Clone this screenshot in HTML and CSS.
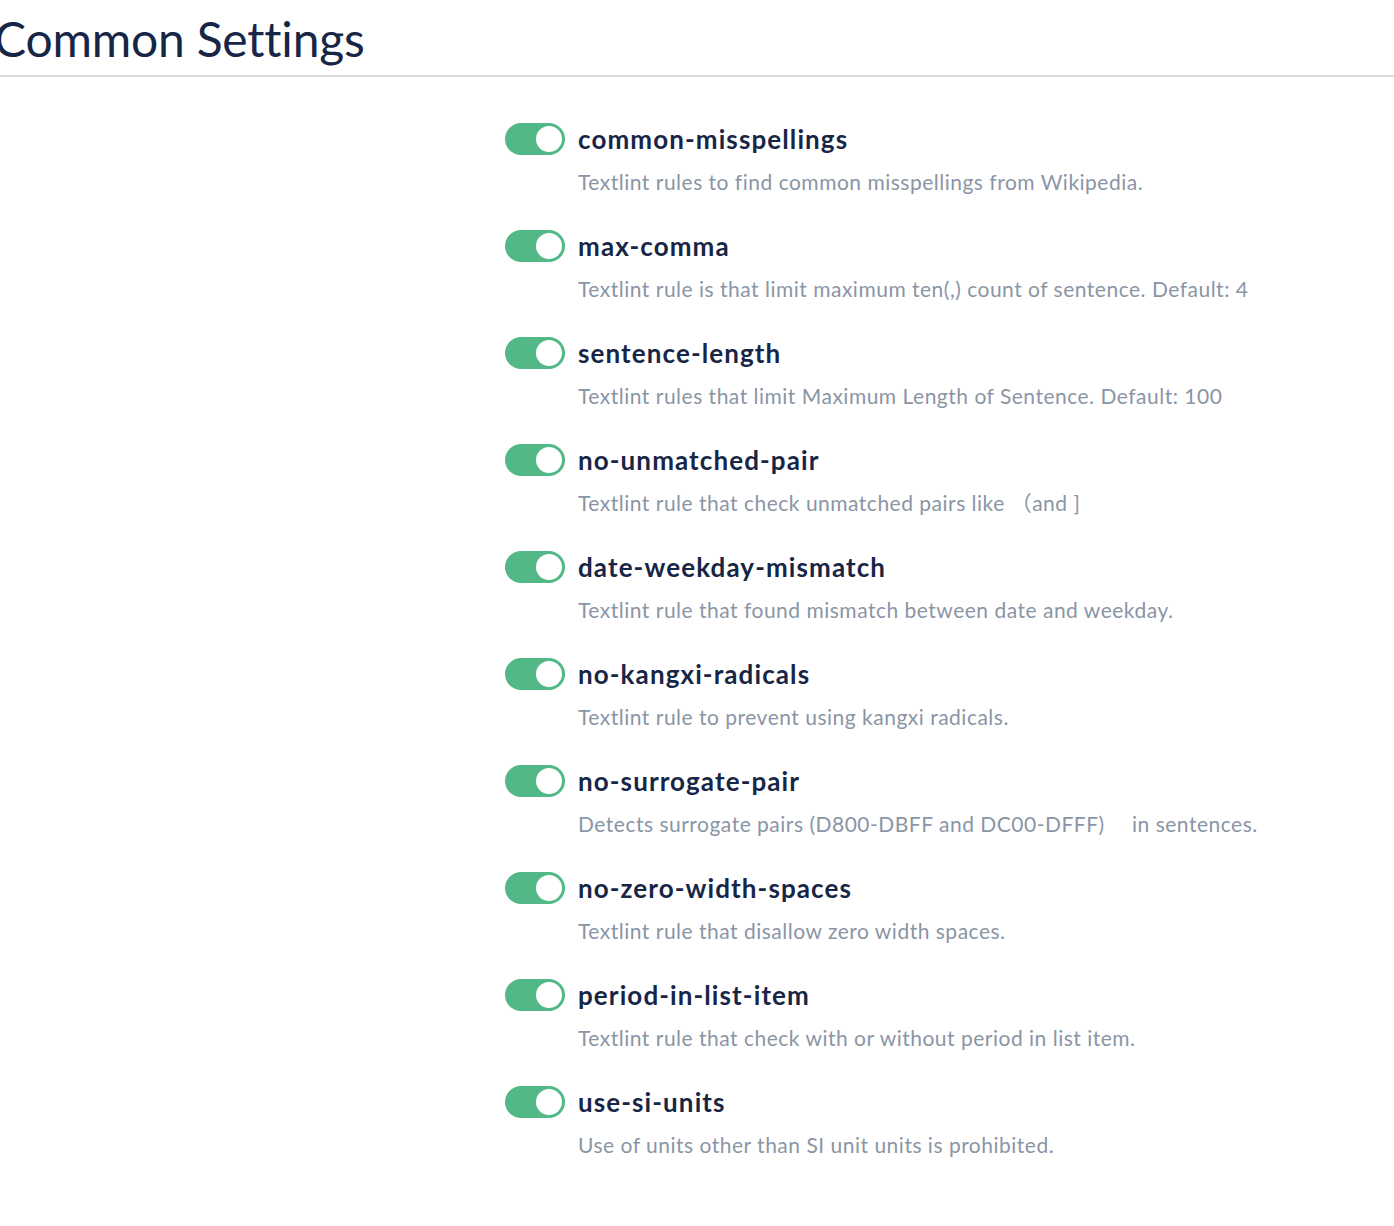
FILE: index.html
```html
<!DOCTYPE html>
<html lang="en">
<head>
<meta charset="utf-8">
<title>Common Settings</title>
<link rel="stylesheet" href="styles.css">
</head>
<body>
<header class="page-header">
  <h1 class="page-title">Common Settings</h1>
</header>
<ul class="rules">
  <li class="rule">
    <span class="toggle on"><span class="knob"></span></span>
    <span class="rule-name">common-misspellings</span>
    <span class="rule-desc">Textlint rules to find common misspellings from Wikipedia.</span>
  </li>
  <li class="rule">
    <span class="toggle on"><span class="knob"></span></span>
    <span class="rule-name">max-comma</span>
    <span class="rule-desc">Textlint rule is that limit maximum ten(,) count of sentence. Default: 4</span>
  </li>
  <li class="rule">
    <span class="toggle on"><span class="knob"></span></span>
    <span class="rule-name">sentence-length</span>
    <span class="rule-desc">Textlint rules that limit Maximum Length of Sentence. Default: 100</span>
  </li>
  <li class="rule">
    <span class="toggle on"><span class="knob"></span></span>
    <span class="rule-name">no-unmatched-pair</span>
    <span class="rule-desc">Textlint rule that check unmatched pairs like （and ]</span>
  </li>
  <li class="rule">
    <span class="toggle on"><span class="knob"></span></span>
    <span class="rule-name">date-weekday-mismatch</span>
    <span class="rule-desc">Textlint rule that found mismatch between date and weekday.</span>
  </li>
  <li class="rule">
    <span class="toggle on"><span class="knob"></span></span>
    <span class="rule-name">no-kangxi-radicals</span>
    <span class="rule-desc">Textlint rule to prevent using kangxi radicals.</span>
  </li>
  <li class="rule">
    <span class="toggle on"><span class="knob"></span></span>
    <span class="rule-name">no-surrogate-pair</span>
    <span class="rule-desc">Detects surrogate pairs (D800-DBFF and DC00-DFFF)　 in sentences.</span>
  </li>
  <li class="rule">
    <span class="toggle on"><span class="knob"></span></span>
    <span class="rule-name">no-zero-width-spaces</span>
    <span class="rule-desc">Textlint rule that disallow zero width spaces.</span>
  </li>
  <li class="rule">
    <span class="toggle on"><span class="knob"></span></span>
    <span class="rule-name">period-in-list-item</span>
    <span class="rule-desc">Textlint rule that check with or without period in list item.</span>
  </li>
  <li class="rule">
    <span class="toggle on"><span class="knob"></span></span>
    <span class="rule-name">use-si-units</span>
    <span class="rule-desc">Use of units other than SI unit units is prohibited.</span>
  </li>
</ul>
</body>
</html>
```

FILE: styles.css
```css
html, body {
  margin: 0;
  padding: 0;
  background: #ffffff;
}

body {
  font-family: Lato, "Noto Sans CJK SC", sans-serif;
  color: #172646;
}

.page-header {
  border-bottom: 2px solid #d8dbe0;
  height: 77px;
  box-sizing: border-box;
  padding-top: 9px;
}

.page-title {
  margin: 0 0 0 -6px;
  font-size: 48px;
  font-weight: 400;
  line-height: 60px;
  letter-spacing: -0.2px;
  color: #172646;
}

.rules {
  list-style: none;
  margin: 46px 0 0 0;
  padding: 0 0 0 505px;
  display: flex;
  flex-direction: column;
  gap: 34px;
}

.rule {
  display: grid;
  grid-template-columns: 60px 1fr;
  column-gap: 13px;
  row-gap: 13px;
  align-items: center;
}

.toggle {
  position: relative;
  width: 60px;
  height: 32px;
  border-radius: 16px;
  background: #51b886;
  display: block;
}

.knob {
  position: absolute;
  top: 3px;
  right: 3px;
  width: 26px;
  height: 26px;
  border-radius: 50%;
  background: #ffffff;
}

.rule-name {
  font-size: 26px;
  font-weight: 700;
  line-height: 32px;
  letter-spacing: 1.1px;
  color: #172646;
}

.rule-desc {
  grid-column: 2;
  font-size: 21px;
  line-height: 28px;
  letter-spacing: 0.5px;
  color: #8a95a5;
}
```
